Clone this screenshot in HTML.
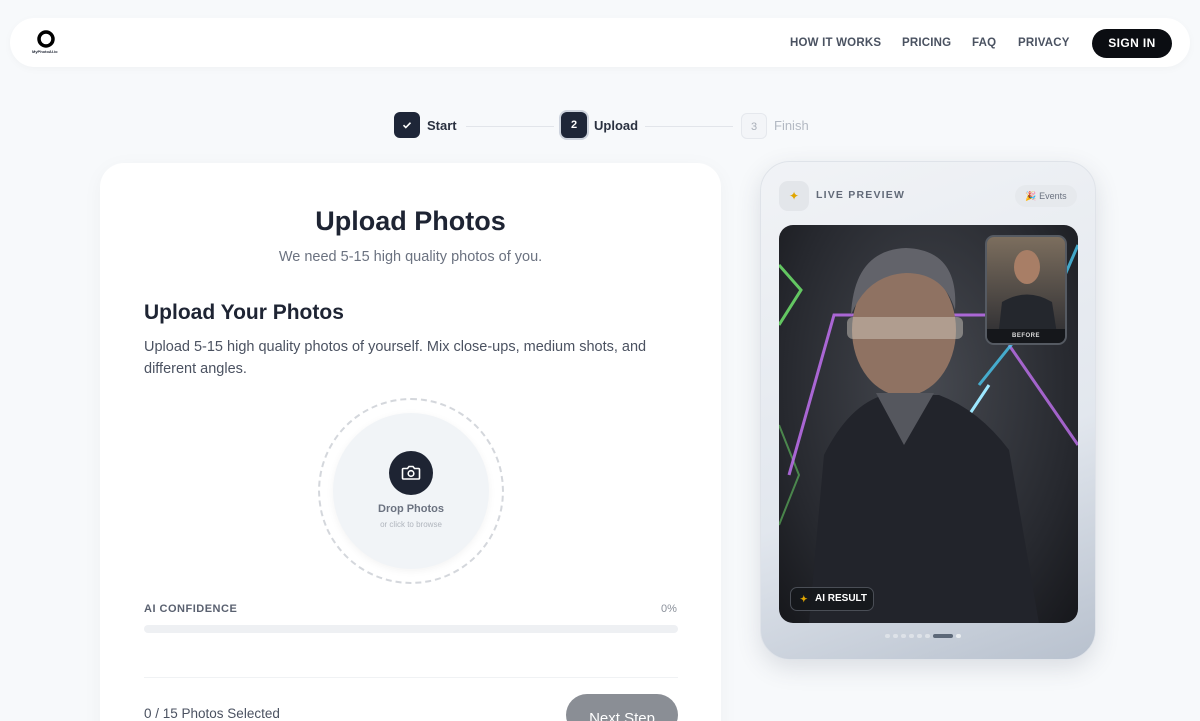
<!DOCTYPE html>
<html><head><meta charset="utf-8"><style>
*{margin:0;padding:0;box-sizing:border-box}
html,body{width:1200px;height:721px;overflow:hidden}
body{background:#f7f9fb;font-family:"Liberation Sans",sans-serif;position:relative;color:#1e2433}
.abs{position:absolute}
.nav{left:10px;top:18px;width:1180px;height:49px;background:#fff;border-radius:25px;box-shadow:0 2px 8px rgba(0,0,0,.03)}
.nav a{position:absolute;top:19px;font-size:11.5px;font-weight:bold;letter-spacing:.2px;color:#4a5261;text-decoration:none}
.signin{left:1082px;top:11px;width:80px;height:29px;background:#0b0d12;border-radius:15px;color:#fff;font-size:12px;font-weight:bold;letter-spacing:.4px;text-align:center;line-height:29px}
.sq{width:26px;height:26px;border-radius:6px;text-align:center;line-height:26px;font-size:11px;font-weight:bold}
.card{left:100px;top:163px;width:621px;height:600px;background:#fff;border-radius:24px;box-shadow:0 4px 20px rgba(0,0,0,.04)}
.panel{left:760px;top:161px;width:336px;height:499px;border-radius:30px;background:linear-gradient(160deg,#f1f3f6 0%,#e2e7ee 60%,#b8c1ce 100%);box-shadow:0 8px 24px rgba(60,70,90,.15);border:1px solid #dfe3e9}
</style></head><body>
<div class="abs nav">
  <svg class="abs" style="left:27px;top:12px" width="18" height="18" viewBox="0 0 18 18"><circle cx="9" cy="9" r="7" fill="none" stroke="#000" stroke-width="3.5"/></svg>
  <div class="abs" style="left:22px;top:31px;font-size:4px;font-weight:bold">MyPhotoAI.io</div>
  <a style="left:780px">HOW IT WORKS</a>
  <a style="left:892px">PRICING</a>
  <a style="left:962px">FAQ</a>
  <a style="left:1008px">PRIVACY</a>
  <div class="abs signin">SIGN IN</div>
</div>

<div class="abs sq" style="left:394px;top:112px;background:#1e2638;color:#fff"><svg width="12" height="12" viewBox="0 0 12 12" style="margin-top:7px"><path d="M2.5 6.2l2.3 2.3 4.7-4.8" fill="none" stroke="#fff" stroke-width="1.6"/></svg></div>
<div class="abs" style="left:427px;top:118px;font-size:13px;font-weight:bold;color:#2a3140">Start</div>
<div class="abs" style="left:466px;top:126px;width:88px;height:1px;background:#e2e5ea"></div>
<div class="abs sq" style="left:561px;top:112px;background:#1e2638;color:#fff;box-shadow:0 0 0 2px #cdd3dd">2</div>
<div class="abs" style="left:594px;top:118px;font-size:13px;font-weight:bold;color:#2a3140">Upload</div>
<div class="abs" style="left:645px;top:126px;width:88px;height:1px;background:#e2e5ea"></div>
<div class="abs sq" style="left:741px;top:113px;background:#f3f5f8;border:1px solid #e5e8ed;color:#a9afb9;font-weight:normal">3</div>
<div class="abs" style="left:774px;top:118px;font-size:13px;color:#b3b9c3">Finish</div>

<div class="abs card">
  <div class="abs" style="left:0;width:621px;top:43px;text-align:center;font-size:27px;font-weight:bold;color:#1e2433">Upload Photos</div>
  <div class="abs" style="left:0;width:621px;top:86px;text-align:center;font-size:14.5px;color:#6b7280">We need 5-15 high quality photos of you.</div>
  <div class="abs" style="left:44px;top:138px;font-size:21px;font-weight:bold;color:#1e2433">Upload Your Photos</div>
  <div class="abs" style="left:44px;top:173px;width:540px;font-size:14.5px;line-height:22px;color:#4b5261">Upload 5-15 high quality photos of yourself. Mix close-ups, medium shots, and different angles.</div>
  <div class="abs" style="left:218px;top:235px;width:186px;height:186px;border-radius:50%;border:2px dashed #d4d7dc"></div>
  <div class="abs" style="left:233px;top:250px;width:156px;height:156px;border-radius:50%;background:#f1f4f7;box-shadow:0 2px 8px rgba(0,0,0,.05)"></div>
  <div class="abs" style="left:289px;top:288px;width:44px;height:44px;border-radius:50%;background:#1e2433">
    <svg width="44" height="44" viewBox="0 0 44 44"><path d="M14.5 17.5h4l1.5-2h4l1.5 2h4a1 1 0 0 1 1 1v8.5a1 1 0 0 1-1 1h-15a1 1 0 0 1-1-1v-8.5a1 1 0 0 1 1-1z" fill="none" stroke="#fff" stroke-width="1.6"/><circle cx="22" cy="22.5" r="2.8" fill="none" stroke="#fff" stroke-width="1.6"/></svg>
  </div>
  <div class="abs" style="left:211px;width:200px;top:340px;text-align:center;font-size:11px;font-weight:bold;color:#6b7280">Drop Photos</div>
  <div class="abs" style="left:211px;width:200px;top:357px;text-align:center;font-size:8px;color:#b0b5bd">or click to browse</div>
  <div class="abs" style="left:44px;top:440px;font-size:11px;font-weight:bold;letter-spacing:.5px;color:#5a6170">AI CONFIDENCE</div>
  <div class="abs" style="left:561px;top:440px;font-size:11px;color:#8a909a">0%</div>
  <div class="abs" style="left:44px;top:462px;width:534px;height:8px;border-radius:4px;background:#eef0f3"></div>
  <div class="abs" style="left:44px;top:514px;width:534px;height:1px;background:#f0f2f4"></div>
  <div class="abs" style="left:44px;top:543px;font-size:13.5px;color:#4b5261">0 / 15 Photos Selected</div>
  <div class="abs" style="left:466px;top:531px;width:112px;height:42px;border-radius:21px;background:#8a8e95;color:#fff;font-size:15px;text-align:center;line-height:42px;padding-top:4px">Next Step</div>
</div>

<div class="abs panel">
  <div class="abs" style="left:18px;top:19px;width:30px;height:30px;border-radius:9px;background:#e3e6ea;text-align:center;line-height:30px;font-size:12px;color:#e0a500">✦</div>
  <div class="abs" style="left:55px;top:27px;font-size:10.5px;font-weight:bold;letter-spacing:1.2px;color:#626a78">LIVE PREVIEW</div>
  <div class="abs" style="left:254px;top:23px;width:62px;height:22px;border-radius:11px;background:#e6e9ed;font-size:9px;color:#6b7280;line-height:22px;text-align:center">🎉 Events</div>
  <div class="abs" style="left:18px;top:63px;width:299px;height:398px;border-radius:14px;overflow:hidden;background:radial-gradient(ellipse at 50% 40%,#464950 0%,#26282e 70%,#16171b 100%)">
    <svg width="299" height="398" viewBox="0 0 299 398" style="position:absolute;left:0;top:0">
      <path d="M0 40 L22 65 L0 100" stroke="#6fe36b" stroke-width="3" fill="none" opacity=".85"/>
      <path d="M0 200 L20 250 L0 300" stroke="#6fe36b" stroke-width="2" fill="none" opacity=".5"/>
      <path d="M10 250 L55 90 L210 90" stroke="#c070f0" stroke-width="3" fill="none" opacity=".85"/>
      <path d="M230 120 L299 220" stroke="#c070f0" stroke-width="3" fill="none" opacity=".8"/>
      <path d="M299 20 L260 110 M200 160 L240 110" stroke="#4ac8f0" stroke-width="3" fill="none" opacity=".8"/>
      <path d="M170 220 L210 160" stroke="#9ee8ff" stroke-width="3" fill="none"/>
      <path d="M150 300 L200 292" stroke="#e0f4ff" stroke-width="3" fill="none"/>
      <path d="M30 398 L45 230 Q70 180 105 170 L160 170 Q200 185 230 225 L260 398 Z" fill="#22242b"/>
      <ellipse cx="125" cy="105" rx="52" ry="66" fill="#8f7262"/>
      <path d="M72 90 Q75 25 127 23 Q180 25 176 85 Q165 48 127 48 Q88 50 72 90z" fill="#62636a"/>
      <rect x="68" y="92" width="116" height="22" rx="6" fill="#d9d2c8" opacity=".45"/>
      <path d="M97 168 L125 220 L155 168 Z" fill="#55575e"/>
    </svg>
    <div class="abs" style="left:206px;top:10px;width:82px;height:110px;border-radius:9px;border:2px solid #555a62;background:linear-gradient(#7c6e5e,#2a2b30);overflow:hidden">
      <svg width="82" height="110" viewBox="0 0 82 110"><ellipse cx="40" cy="30" rx="13" ry="17" fill="#a87e66"/><path d="M10 110 L15 65 Q40 50 65 65 L72 110z" fill="#24272d"/></svg>
      <div class="abs" style="left:0;bottom:0;width:100%;height:14px;background:#15171b;color:#ddd;font-size:6px;font-weight:bold;text-align:center;line-height:14px;letter-spacing:.5px">BEFORE</div>
    </div>
    <div class="abs" style="left:11px;top:362px;width:84px;height:24px;border-radius:7px;background:rgba(20,22,26,.8);border:1px solid #4a4e56;color:#fff;font-size:10px;font-weight:bold;line-height:22px;padding-left:24px">AI RESULT<span class="abs" style="left:9px;top:0;color:#e0a500;font-size:9px">✦</span></div>
  </div>
  <div class="abs" style="left:124px;top:472px;display:flex;gap:3px;align-items:center">
    <i style="width:5px;height:4px;background:#dde2e8;border-radius:2px"></i><i style="width:5px;height:4px;background:#dde2e8;border-radius:2px"></i><i style="width:5px;height:4px;background:#dde2e8;border-radius:2px"></i><i style="width:5px;height:4px;background:#dde2e8;border-radius:2px"></i><i style="width:5px;height:4px;background:#dde2e8;border-radius:2px"></i><i style="width:5px;height:4px;background:#dde2e8;border-radius:2px"></i><i style="width:20px;height:4px;background:#5c6878;border-radius:2px"></i><i style="width:5px;height:4px;background:#e8ecf0;border-radius:2px"></i>
  </div>
</div>
</body></html>
